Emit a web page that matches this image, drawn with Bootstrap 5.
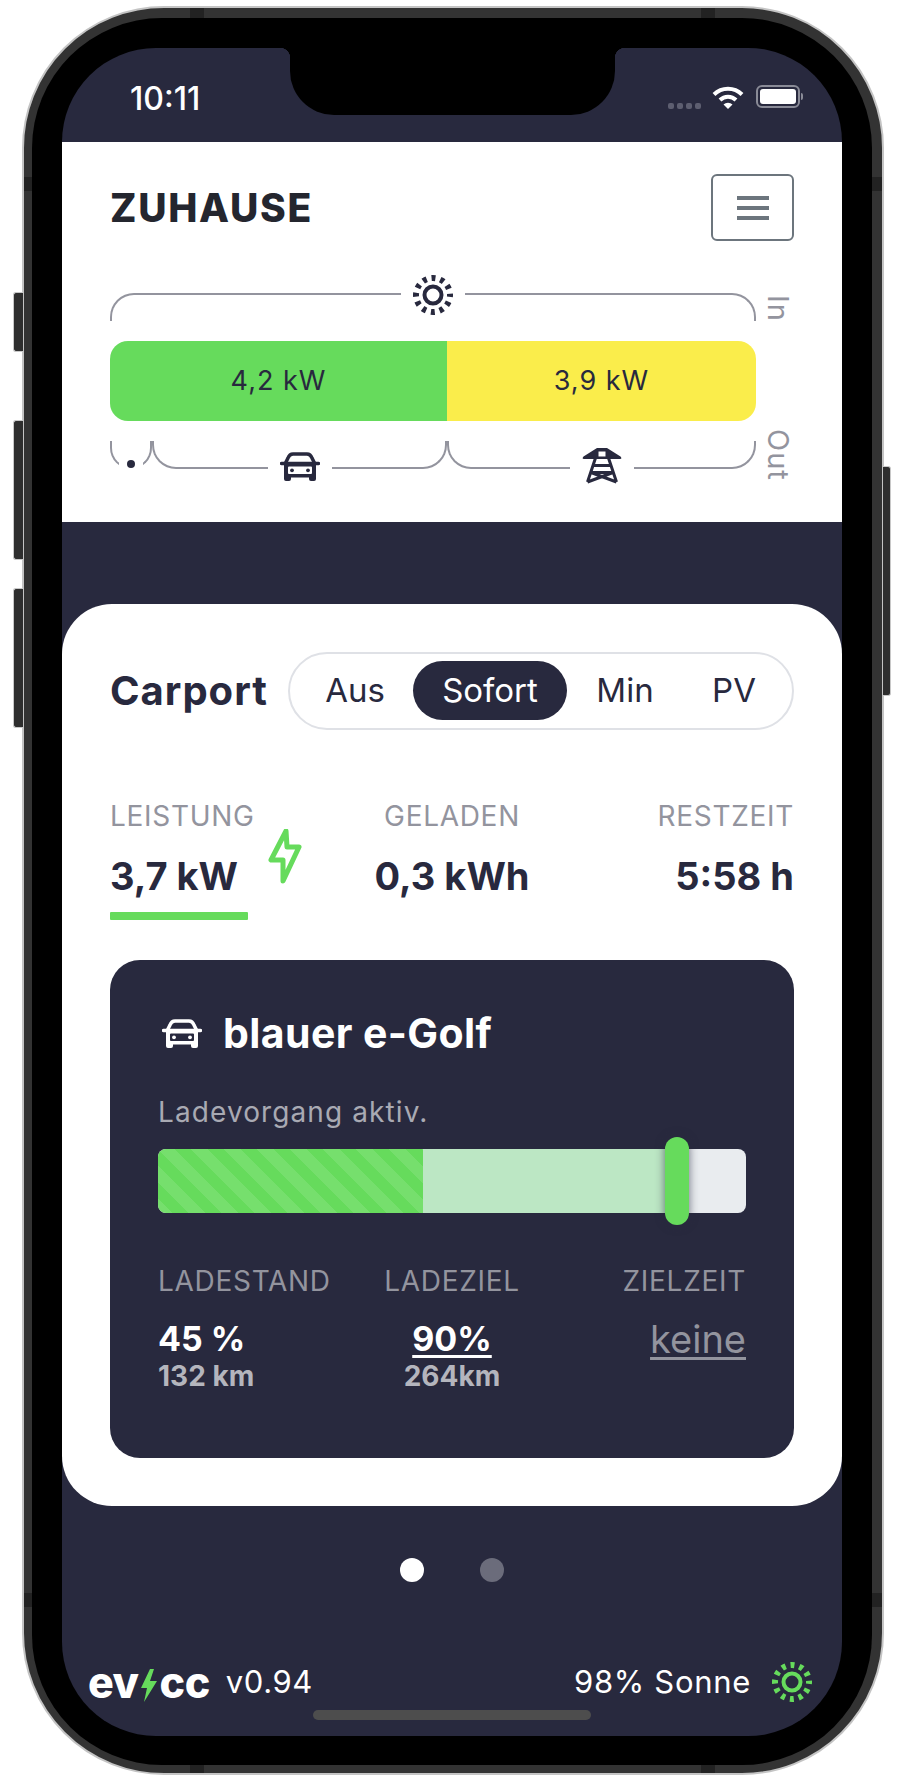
<!DOCTYPE html>
<html lang="de">
<head>
<meta charset="utf-8">
<title>evcc</title>
<link href="https://cdn.jsdelivr.net/npm/bootstrap@5.3.0/dist/css/bootstrap.min.css" rel="stylesheet">
<style>
:root{--navy:#28293e;--grey:#93949e;--green:#66db5c;--yellow:#faed4b;}
html,body{margin:0;background:#fff;}
body{font-family:Inter,"Liberation Sans",sans-serif;color:var(--navy);width:904px;height:1780px;overflow:hidden;}
.device{position:relative;box-sizing:border-box;margin:6px 0 0 22px;width:862px;height:1769px;border:2px solid #c4c4c4;border-radius:142px;background:#333;padding:10px 10px 8px 8px;}
.side-btn{position:absolute;width:10px;background:#2e2e2e;border:1px solid #c8c8c8;border-right:0;border-radius:3px 0 0 3px;left:-11px;}
.side-a{top:284px;height:60px}.side-b{top:412px;height:140px}.side-c{top:580px;height:140px}
.side-r{left:auto;right:-9px;top:458px;height:230px;width:8px;border-right:1px solid #c8c8c8;border-left:0;border-radius:0 3px 3px 0;}
.band{position:absolute;background:#222;}
.band-t1{top:0;left:166px;width:14px;height:10px}.band-t2{top:0;left:677px;width:14px;height:10px}
.band-b1{bottom:0;left:166px;width:14px;height:8px}.band-b2{bottom:0;left:677px;width:14px;height:8px}
.band-l1{left:0;top:169px;width:8px;height:14px}.band-r1{right:0;top:169px;width:10px;height:14px}
.band-l2{left:0;top:1585px;width:8px;height:14px}.band-r2{right:0;top:1585px;width:10px;height:14px}
.bezel{background:#000;border-radius:130px;padding:30px;height:100%;}
.screen{position:relative;background:var(--navy);border-radius:94px;height:1688px;overflow:hidden;display:flex;flex-direction:column;}
.notch{position:absolute;top:0;left:228px;width:325px;height:67px;background:#000;border-radius:0 0 44px 44px;}
.notch::before,.notch::after{content:"";position:absolute;top:0;width:10px;height:10px;}
.notch::before{left:-10px;background:radial-gradient(circle at 0 100%,transparent 10px,#000 10.5px);}
.notch::after{right:-10px;background:radial-gradient(circle at 100% 100%,transparent 10px,#000 10.5px);}
.statusbar{height:94px;flex:none;padding:37px 42px 0 68px;color:#fff;}
.clock{font-size:32px;font-weight:500;line-height:30px;margin-top:-1px;}
.sig{display:flex;gap:3px;margin:18px 11px 0 0;}
.sig i{display:block;width:6px;height:6px;border-radius:2px;background:#5d5e70;}
.batt{position:relative;width:44px;height:23px;border:2px solid #8a8b97;border-radius:6px;padding:2px;margin-left:12px;}
.batt b{display:block;height:100%;background:#fff;border-radius:3px;}
.batt::after{content:"";position:absolute;right:-5px;top:6px;width:2px;height:7px;background:#8a8b97;border-radius:0 2px 2px 0;}
.topbox{background:#fff;height:380px;flex:none;padding:32px 48px 0;}
.zuhause{font-size:39px;font-weight:800;letter-spacing:1.7px;line-height:1;margin:0;color:#24262f;}
.menu-btn{width:83px;height:67px;padding:0;border:2px solid #6c757d;border-radius:6px;background:transparent;display:flex;flex-direction:column;align-items:center;justify-content:center;gap:6px;}
.menu-btn span{display:block;width:32px;height:4px;background:#6c757d;}
.flow{position:relative;margin-top:52px;width:646px;}
.brace{position:relative;border:2px solid var(--grey);}
.brace-in{height:28px;border-bottom:0;border-radius:24px 24px 0 0;}
.brace-out{height:28px;border-top:0;border-radius:0 0 24px 24px;}
.brace-icon{position:absolute;left:50%;transform:translateX(-50%);background:#fff;width:64px;display:flex;justify-content:center;align-items:center;}
.brace-in .brace-icon{top:-20px;}
.brace-out .brace-icon{bottom:-17px;height:36px;}
.brace-out .small-wrap{width:24px;height:14px;bottom:-4px;}
.flowbar{display:flex;height:80px;margin:20px 0 20px;border-radius:18px;overflow:hidden;font-size:27px;letter-spacing:1px;}
.seg-a{width:337px;background:var(--green);}
.seg-b{flex:1;background:var(--yellow);}
.seg-x{width:42px;}.seg-c{width:295px;}.seg-d{flex:1;}
.dot-icon{width:8px;height:8px;border-radius:50%;background:var(--navy);}
.side-label{position:absolute;left:654px;writing-mode:vertical-rl;color:var(--grey);font-size:29px;line-height:28px;letter-spacing:1px;}
.lbl-in{top:2px;}.lbl-out{top:136px;}
.panel{background:#fff;height:902px;margin-top:82px;flex:none;border-radius:50px;padding:48px;}
.carport{font-size:40px;font-weight:700;line-height:1;margin:0;white-space:nowrap;letter-spacing:1px;}
.modes{width:506px;height:78px;border:2px solid #dfe1e6;border-radius:39px;padding:7px 0 0 7px;gap:0;}
.modes button{border:0;background:transparent;font-size:33px;color:var(--navy);padding:0;height:59px;border-radius:30px;line-height:1;text-align:center;}
.mode-a{width:116px;}
.modes .mode-on{width:154px;background:var(--navy);color:#fff;}
.mode-c{width:116px;}.mode-d{width:102px;}
.statrow{margin-top:69px;}
.st-l{font-size:28px;line-height:34px;color:var(--grey);letter-spacing:.7px;}
.st-v{font-size:38px;font-weight:700;line-height:44px;margin-top:21px;white-space:nowrap;}
.st-bar{width:138px;height:8px;background:var(--green);margin-top:14px;border-radius:1px;}
.st-cell{position:relative;}
.bolt{position:absolute;left:158px;top:30px;}
.vehicle{margin-top:40px;background:var(--navy);height:498px;border-radius:30px;padding:50px 48px 0;color:#fff;}
.veh-head{gap:21px;}
.veh-name{font-size:41px;font-weight:700;line-height:46px;margin:0;letter-spacing:.4px;}
.veh-status{font-size:28px;color:#a9aab3;line-height:34px;margin-top:39px;letter-spacing:1.1px;}
.soc{position:relative;height:64px;margin-top:20px;}
.soc-track{height:64px;border-radius:8px;background:#e9ecef;}
.soc-now{background-color:var(--green);background-image:linear-gradient(45deg,rgba(255,255,255,.1) 25%,transparent 25%,transparent 50%,rgba(255,255,255,.1) 50%,rgba(255,255,255,.1) 75%,transparent 75%,transparent);background-size:33px 33px;width:265px;}
.soc-rest{background:#bce7c4;width:255px;}
.soc-thumb{position:absolute;left:507px;top:-12px;width:24px;height:88px;border-radius:12px;background:var(--green);box-shadow:0 0 10px rgba(40,41,62,.65);}
.vrow{margin-top:51px;}
.vv{font-size:34px;font-weight:700;line-height:40px;margin-top:21px;}
.vs{font-size:28px;font-weight:700;line-height:30px;color:#b4b5bd;margin-top:2px;}
.vlink{color:#fff;text-decoration:underline;text-underline-offset:4px;}
.vnone{font-size:38px;font-weight:400;color:var(--grey);text-decoration:underline;text-underline-offset:4px;}
.pager{margin-top:52px;gap:56px;}
.pager i{display:block;width:24px;height:24px;border-radius:50%;background:#fff;}
.pager i+i{background:#6b6c7b;}
.foot{position:absolute;left:26px;right:30px;top:1613px;color:#fff;height:42px;font-size:31px;line-height:42px;}
.logo{font-size:43px;font-weight:800;letter-spacing:-.5px;line-height:42px;display:flex;align-items:center;}
.logo svg{margin:6px 3px 0 1px;}
.ver{margin-left:16px;letter-spacing:.6px;}
.sun-txt{letter-spacing:.7px;}
.foot-right{gap:21px;}
.sun-green{color:#66db5c;}
.home-ind{position:absolute;left:251px;top:1662px;width:278px;height:10px;background:#4d4d4d;border-radius:5px;}
</style>
</head>
<body>
<svg width="0" height="0" class="position-absolute">
  <defs>
    <symbol id="sun" viewBox="0 0 40 40">
      <circle cx="20" cy="20" r="8.500" fill="none" stroke="currentColor" stroke-width="4"/>
      <circle cx="20" cy="20" r="17" fill="none" stroke="currentColor" stroke-width="6" stroke-dasharray="4 4.900" stroke-dashoffset="2"/>
    </symbol>
    <symbol id="car" viewBox="0 0 40 29">
      <path d="M5 12 8 6Q9.500 2 13 2H27Q30.500 2 32 6L35 12" fill="none" stroke="currentColor" stroke-width="3.500"/>
      <path d="M1.500 11.500H38.500" stroke="currentColor" stroke-width="3.500" stroke-linecap="round"/>
      <path fill="currentColor" fill-rule="evenodd" d="M6 11H34Q36 11 36 13V27Q36 29 34 29H31Q29 29 29 27V25.500H11V27Q11 29 9 29H6Q4 29 4 27V13Q4 11 6 11ZM9 14.500Q8 14.500 8 15.500V21Q8 22 9 22H31Q32 22 32 21V15.500Q32 14.500 31 14.500Z"/>
      <circle cx="12" cy="18.300" r="1.900" fill="currentColor"/><circle cx="28" cy="18.300" r="1.900" fill="currentColor"/>
    </symbol>
  </defs>
</svg>
<div class="device">
  <span class="side-btn side-a"></span><span class="side-btn side-b"></span><span class="side-btn side-c"></span><span class="side-btn side-r"></span>
  <span class="band band-t1"></span><span class="band band-t2"></span><span class="band band-b1"></span><span class="band band-b2"></span>
  <span class="band band-l1"></span><span class="band band-r1"></span><span class="band band-l2"></span><span class="band band-r2"></span>
  <div class="bezel">
    <div class="screen">
      <div class="notch"></div>
      <div class="statusbar d-flex justify-content-between align-items-start">
        <div class="clock">10:11</div>
        <div class="d-flex align-items-start">
          <div class="sig"><i></i><i></i><i></i><i></i></div>
          <svg width="32" height="24" viewBox="0 0 32 24" class="d-block" aria-hidden="true">
            <path d="M2 9.500A20 20 0 0 1 30 9.500" fill="none" stroke="#fff" stroke-width="4"/>
            <path d="M8 15A11.500 11.500 0 0 1 24 15" fill="none" stroke="#fff" stroke-width="4"/>
            <path d="M11.500 19.500A6.500 6.500 0 0 1 20.500 19.500L16 24Z" fill="#fff"/>
          </svg>
          <div class="batt"><b></b></div>
        </div>
      </div>

      <div class="topbox">
        <div class="d-flex justify-content-between align-items-center">
          <h1 class="zuhause">ZUHAUSE</h1>
          <button class="menu-btn" type="button" aria-label="Menü"><span></span><span></span><span></span></button>
        </div>
        <div class="flow">
          <div class="brace brace-in">
            <div class="brace-icon"><svg width="40" height="40" aria-hidden="true"><use href="#sun"/></svg></div>
          </div>
          <div class="flowbar">
            <div class="seg-a d-flex align-items-center justify-content-center">4,2 kW</div>
            <div class="seg-b d-flex align-items-center justify-content-center">3,9 kW</div>
          </div>
          <div class="d-flex">
            <div class="brace brace-out seg-x"><div class="brace-icon small-wrap"><span class="dot-icon"></span></div></div>
            <div class="brace brace-out seg-c"><div class="brace-icon"><svg width="40" height="29" aria-hidden="true"><use href="#car"/></svg></div></div>
            <div class="brace brace-out seg-d"><div class="brace-icon">
              <svg width="40" height="36" viewBox="0 0 40 36" aria-hidden="true">
                <path fill="currentColor" fill-rule="evenodd" d="M15 0H25L38.500 8.500Q40.500 11 38 11H2Q-.5 11 1.500 8.500ZM16.500 3.500V8.500H23.500V3.500Z"/>
                <path d="M13.500 10 5.500 34M26.500 10 34.500 34M11 17.500H29M9 24.500H31L5.500 34M9 24.500 34.500 34" fill="none" stroke="currentColor" stroke-width="3" stroke-linejoin="round"/>
              </svg>
            </div></div>
          </div>
          <div class="side-label lbl-in">In</div>
          <div class="side-label lbl-out">Out</div>
        </div>
      </div>

      <div class="panel">
        <div class="d-flex justify-content-between align-items-center">
          <h2 class="carport">Carport</h2>
          <div class="modes d-flex">
            <button type="button" class="mode-a">Aus</button>
            <button type="button" class="mode-on">Sofort</button>
            <button type="button" class="mode-c">Min</button>
            <button type="button" class="mode-d">PV</button>
          </div>
        </div>
        <div class="row g-0 statrow">
          <div class="col-4 st-cell">
            <div class="st-l">LEISTUNG</div>
            <div class="st-v">3,7 kW</div>
            <div class="st-bar"></div>
            <svg class="bolt" width="34" height="55" viewBox="-1 -1 34 55" fill="none" stroke="#66db5c" stroke-width="5" stroke-linejoin="round" aria-hidden="true"><path d="M17 1 2 30H14V51L30 17H18Z"/></svg>
          </div>
          <div class="col-4 text-center">
            <div class="st-l">GELADEN</div>
            <div class="st-v">0,3 kWh</div>
          </div>
          <div class="col-4 text-end">
            <div class="st-l">RESTZEIT</div>
            <div class="st-v">5:58 h</div>
          </div>
        </div>
        <div class="vehicle">
          <div class="d-flex align-items-center veh-head">
            <svg width="40" height="29" class="ms-1 flex-shrink-0" aria-hidden="true"><use href="#car"/></svg>
            <h3 class="veh-name">blauer e-Golf</h3>
          </div>
          <div class="veh-status">Ladevorgang aktiv.</div>
          <div class="soc">
            <div class="soc-track d-flex overflow-hidden">
              <div class="soc-now"></div>
              <div class="soc-rest"></div>
            </div>
            <div class="soc-thumb"></div>
          </div>
          <div class="row g-0 vrow">
            <div class="col-4">
              <div class="st-l">LADESTAND</div>
              <div class="vv">45 %</div>
              <div class="vs">132 km</div>
            </div>
            <div class="col-4 text-center">
              <div class="st-l">LADEZIEL</div>
              <div class="vv vlink">90%</div>
              <div class="vs">264km</div>
            </div>
            <div class="col-4 text-end">
              <div class="st-l">ZIELZEIT</div>
              <div class="vv vnone">keine</div>
            </div>
          </div>
        </div>
      </div>

      <div class="pager d-flex justify-content-center"><i></i><i></i></div>

      <div class="foot d-flex justify-content-between align-items-center">
        <div class="d-flex align-items-center">
          <div class="logo">ev<svg width="17" height="33" viewBox="0 0 17 33" aria-hidden="true"><path fill="#66db5c" d="M10 0H14L10 12H17L4 33 7 19H1Z"/></svg>cc</div>
          <div class="ver">v0.94</div>
        </div>
        <div class="d-flex align-items-center foot-right">
          <div class="sun-txt">98% Sonne</div>
          <svg width="40" height="40" class="sun-green" aria-hidden="true"><use href="#sun"/></svg>
        </div>
      </div>
      <div class="home-ind"></div>
    </div>
  </div>
</div>
</body>
</html>
